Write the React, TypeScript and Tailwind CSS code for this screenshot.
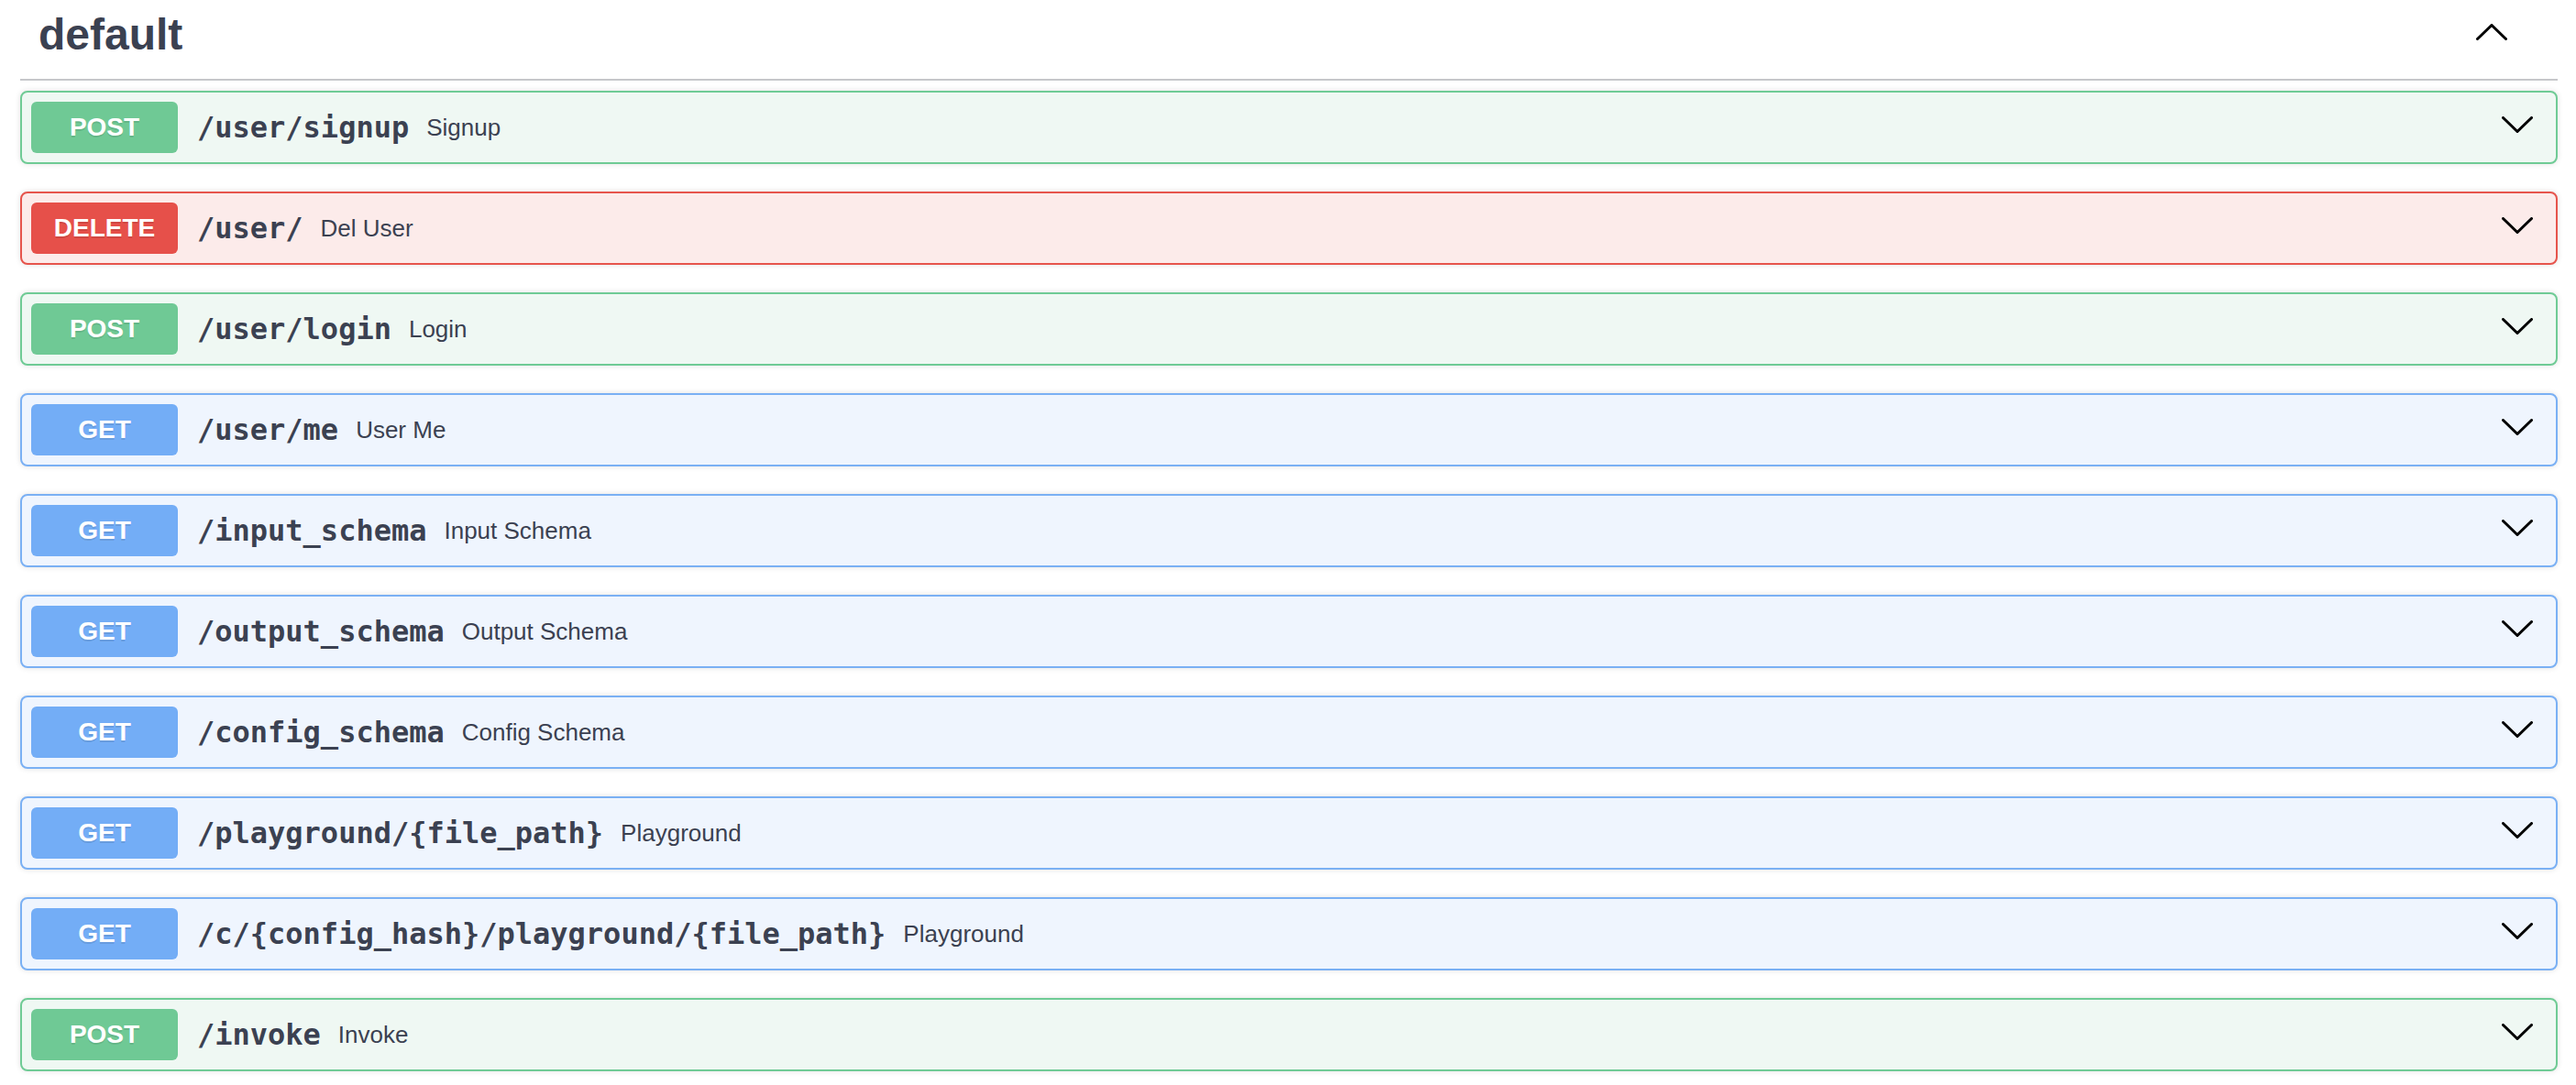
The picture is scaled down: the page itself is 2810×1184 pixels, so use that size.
import React from "react";

type Method = "POST" | "GET" | "DELETE";

const endpoints: { method: Method; path: string; summary: string }[] = [
  { method: "POST", path: "/user/signup", summary: "Signup" },
  { method: "DELETE", path: "/user/", summary: "Del User" },
  { method: "POST", path: "/user/login", summary: "Login" },
  { method: "GET", path: "/user/me", summary: "User Me" },
  { method: "GET", path: "/input_schema", summary: "Input Schema" },
  { method: "GET", path: "/output_schema", summary: "Output Schema" },
  { method: "GET", path: "/config_schema", summary: "Config Schema" },
  { method: "GET", path: "/playground/{file_path}", summary: "Playground" },
  { method: "GET", path: "/c/{config_hash}/playground/{file_path}", summary: "Playground" },
  { method: "POST", path: "/invoke", summary: "Invoke" },
];

const styles: Record<Method, { block: string; badge: string }> = {
  POST: {
    block: "border-[#6fcb95] bg-[#eff8f3]",
    badge: "bg-[#6fc995]",
  },
  DELETE: {
    block: "border-[#e6544c] bg-[#fcebea]",
    badge: "bg-[#e6504a]",
  },
  GET: {
    block: "border-[#7ab0f4] bg-[#eff5fe]",
    badge: "bg-[#73adf6]",
  },
};

function Chevron({ up = false }: { up?: boolean }) {
  return (
    <svg width="34" height="18" viewBox="0 0 34 18" className="shrink-0">
      <polyline
        points={up ? "1.5,16.5 17,1.5 32.5,16.5" : "1.5,1.5 17,16.5 32.5,1.5"}
        fill="none"
        stroke="#000"
        strokeWidth="3"
        strokeLinecap="round"
        strokeLinejoin="miter"
      />
    </svg>
  );
}

function OpBlock({ method, path, summary }: { method: Method; path: string; summary: string }) {
  const s = styles[method];
  return (
    <div
      className={`flex h-[80px] items-center rounded-[8px] border-2 pl-[10px] pr-[25px] shadow-[0_0_6px_rgba(0,0,0,0.12)] ${s.block}`}
    >
      <span
        className={`flex h-[56px] w-[160px] shrink-0 items-center justify-center rounded-[6px] text-[28px] font-bold text-white [text-shadow:0_2px_0_rgba(0,0,0,0.1)] ${s.badge}`}
      >
        {method}
      </span>
      <span className="ml-[21px] mr-[19px] font-['DejaVu_Sans_Mono',monospace] text-[32px] font-bold text-[#3b4151]">
        {path}
      </span>
      <span className="flex-1 text-[26px] text-[#3b4151]">{summary}</span>
      <div className="mb-[7px]">
        <Chevron />
      </div>
    </div>
  );
}

export default function App() {
  return (
    <div className="min-h-[1184px] bg-white pl-[22px] pr-[20px] font-['Liberation_Sans',Arial,sans-serif]">
      {/* Tag header */}
      <div className="flex items-start justify-between border-b-2 border-[#c6c7ca] pb-[21px] pl-[20px] pr-[55px] pt-[10px]">
        <h3 className="text-[48px] leading-[55px] font-bold text-[#3b4151]">default</h3>
        <div className="mt-[16px]">
          <Chevron up />
        </div>
      </div>

      {/* Operations */}
      <div className="mt-[11px] flex flex-col gap-[30px]">
        {endpoints.map((e, i) => (
          <OpBlock key={i} {...e} />
        ))}
      </div>
    </div>
  );
}
